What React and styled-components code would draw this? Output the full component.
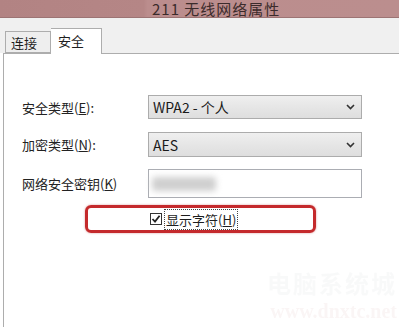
import React from 'react';
import styled, { createGlobalStyle } from 'styled-components';

const GlobalStyle = createGlobalStyle`
  html, body {
    margin: 0;
    padding: 0;
    background: #ffffff;
  }
  body {
    font-family: "Noto Sans CJK SC", "Noto Sans", sans-serif;
    color: #1f1f1f;
  }
`;

const Window = styled.div`
  width: 399px;
  height: 327px;
  overflow: hidden;
  display: flex;
  flex-direction: column;
  background: #ffffff;
  position: relative;
`;

const TitleBar = styled.div`
  height: 18px;
  flex-shrink: 0;
  display: flex;
  align-items: center;
  padding-left: 152px;
  box-sizing: border-box;
  background: linear-gradient(90deg, #b28383 0%, #b58686 36%, #bb8d8d 37%, #bb8e8e 100%);
  border-bottom: 1px solid #9c7474;
`;

const Title = styled.span`
  font-size: 15px;
  line-height: 15px;
  color: #3b2b2b;
  white-space: nowrap;
  letter-spacing: 1px;
`;

const TabStrip = styled.div`
  height: 35px;
  flex-shrink: 0;
  background: #f0f0f0;
  display: flex;
  align-items: flex-end;
  padding-left: 5px;
  position: relative;
  z-index: 1;
`;

const Tab = styled.div`
  box-sizing: border-box;
  height: ${p => (p.$active ? '26px' : '22px')};
  width: ${p => (p.$active ? '51px' : '46px')};
  margin-bottom: ${p => (p.$active ? '-1px' : '0')};
  border: 1px solid #adadad;
  border-left: ${p => (p.$active ? 'none' : '1px solid #adadad')};
  border-bottom: ${p => (p.$active ? 'none' : '1px solid #adadad')};
  background: ${p => (p.$active ? '#ffffff' : '#eeeeee')};
  font-size: 13px;
  display: flex;
  align-items: ${p => (p.$active ? 'flex-start' : 'center')};
  padding-top: ${p => (p.$active ? '2px' : '0')};
  padding-left: ${p => (p.$active ? '7px' : '5px')};
  color: #1e1e1e;
`;

const Panel = styled.div`
  flex: 1;
  margin-left: 3px;
  border-left: 1px solid #adadad;
  border-top: 1px solid #adadad;
  background: #ffffff;
  padding-top: 41px;
  display: flex;
  flex-direction: column;
`;

const FormGrid = styled.div`
  display: grid;
  grid-template-columns: 126px 214px;
  grid-template-rows: 24px 25px 29px;
  row-gap: 13px;
  padding-left: 18px;
  align-items: center;
  & > :nth-child(5), & > :nth-child(6) {
    margin-top: -2px;
  }
`;

const Label = styled.div`
  font-size: 13px;
  color: #222;
  white-space: nowrap;
  u {
    text-decoration: underline;
    text-underline-offset: 1px;
  }
`;

const Select = styled.div`
  box-sizing: border-box;
  height: 100%;
  border: 1px solid #acacac;
  background: linear-gradient(180deg, #efefef 0%, #e6e6e6 50%, #dedede 100%);
  display: flex;
  align-items: center;
  justify-content: space-between;
  padding: 0 6px 0 4px;
  font-size: 14px;
  color: #1a1a1a;
`;

const TextBox = styled.div`
  box-sizing: border-box;
  height: 100%;
  border: 1px solid #abadb3;
  background: #ffffff;
  display: flex;
  align-items: center;
  padding-left: 3px;
`;

const Blurred = styled.span`
  display: block;
  width: 64px;
  height: 14px;
  background: #cfcfcf;
  filter: blur(3px);
  border-radius: 3px;
`;

const Highlight = styled.div`
  box-sizing: border-box;
  margin-top: 6px;
  margin-left: 81px;
  width: 231px;
  height: 28px;
  border: 3px solid #c42a2c;
  border-radius: 6px;
  box-shadow: 0 0 2px rgba(180, 30, 30, 0.5);
  display: flex;
  align-items: center;
  padding-left: 62px;
  gap: 2px;
`;

const Box = styled.span`
  box-sizing: border-box;
  width: 12px;
  height: 12px;
  border: 1px solid #333;
  background: #fff;
  display: flex;
  align-items: center;
  justify-content: center;
`;

const CheckLabel = styled.span`
  font-size: 13px;
  line-height: 19px;
  padding: 0 1px;
  border: 1px dotted #444;
  color: #1e1e1e;
  u {
    text-underline-offset: 1px;
  }
`;

const Watermark = styled.div`
  position: absolute;
  right: 2px;
  bottom: 4px;
  display: flex;
  flex-direction: column;
  align-items: flex-end;
  opacity: 0.06;
  color: #b46060;
  pointer-events: none;
`;

const WmBig = styled.span`
  font-size: 24px;
  font-weight: 700;
  letter-spacing: 2px;
  color: #9aa0a6;
`;

const WmSmall = styled.span`
  font-family: "Liberation Serif", serif;
  font-size: 20px;
  font-weight: 700;
`;

const Chevron = () => (
  <svg width="9" height="6" viewBox="0 0 9 6">
    <path d="M1 1 L4.5 4.5 L8 1" fill="none" stroke="#333" strokeWidth="1.6" />
  </svg>
);

const Tick = () => (
  <svg width="10" height="10" viewBox="0 0 10 10">
    <path d="M1.5 5 L4 7.6 L8.6 1.8" fill="none" stroke="#222" strokeWidth="1.8" />
  </svg>
);

export default function App() {
  return (
    <>
      <GlobalStyle />
      <Window>
        <TitleBar>
          <Title>211 无线网络属性</Title>
        </TitleBar>
        <TabStrip>
          <Tab>连接</Tab>
          <Tab $active>安全</Tab>
        </TabStrip>
        <Panel>
          <FormGrid>
            <Label>安全类型(<u>E</u>):</Label>
            <Select>
              <span>WPA2 - 个人</span>
              <Chevron />
            </Select>
            <Label>加密类型(<u>N</u>):</Label>
            <Select>
              <span>AES</span>
              <Chevron />
            </Select>
            <Label>网络安全密钥(<u>K</u>)</Label>
            <TextBox>
              <Blurred />
            </TextBox>
          </FormGrid>
          <Highlight>
            <Box>
              <Tick />
            </Box>
            <CheckLabel>显示字符(<u>H</u>)</CheckLabel>
          </Highlight>
        </Panel>
        <Watermark>
          <WmBig>电脑系统城</WmBig>
          <WmSmall>www.dnxtc.net</WmSmall>
        </Watermark>
      </Window>
    </>
  );
}
